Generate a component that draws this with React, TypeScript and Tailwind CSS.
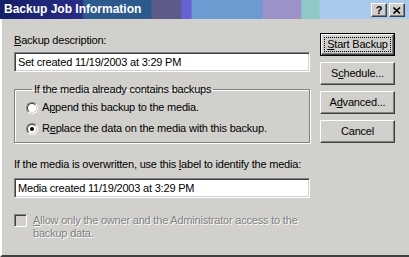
import React from "react";

const raised =
  "border border-t-white border-l-white border-b-[#404040] border-r-[#404040] shadow-[inset_-1px_-1px_0_#808080]";
const sunken =
  "border border-t-[#808080] border-l-[#808080] border-b-white border-r-white shadow-[inset_1px_1px_0_#404040,inset_-1px_-1px_0_#d2d0cc]";

function TitleButton({ children }: { children: React.ReactNode }) {
  return (
    <div
      className={`flex h-[14px] w-[16px] items-center justify-center bg-[#d2d0cc] ${raised}`}
    >
      {children}
    </div>
  );
}

function Button({
  children,
  isDefault,
}: {
  children: React.ReactNode;
  isDefault?: boolean;
}) {
  if (isDefault) {
    return (
      <div className="h-[23px] w-[75px] border border-black">
        <div
          className={`flex h-full w-full items-center justify-center bg-[#d2d0cc] p-[2px] ${raised}`}
        >
          <div className="flex h-full w-full items-center justify-center border border-dotted border-black">
            {children}
          </div>
        </div>
      </div>
    );
  }
  return (
    <div
      className={`flex h-[23px] w-[75px] items-center justify-center bg-[#d2d0cc] ${raised}`}
    >
      {children}
    </div>
  );
}

function Radio({ checked }: { checked?: boolean }) {
  return (
    <div className="h-[12px] w-[12px] shrink-0 rounded-full border border-t-[#808080] border-l-[#808080] border-b-white border-r-white">
      <div className="flex h-full w-full items-center justify-center rounded-full border border-t-[#404040] border-l-[#404040] border-b-[#d2d0cc] border-r-[#d2d0cc] bg-white">
        {checked && <div className="h-[4px] w-[4px] rounded-full bg-black" />}
      </div>
    </div>
  );
}

export default function App() {
  return (
    <div className="flex h-[257px] w-[409px] flex-col overflow-hidden bg-[#d2d0cc] font-['Liberation_Sans',Arial,sans-serif] text-[11px] leading-[13px] tracking-[-0.2px] text-black">
      <div className="flex h-[19px] shrink-0 items-center bg-[linear-gradient(90deg,#141f66_0px,#2a2b88_82px,#2d5a8d_84px,#2d5a8d_151px,#5d5b8c_152px,#5d5b8c_181px,#6661d6_182px,#6661d6_191px,#6b9bd0_192px,#6b9bd0_262px,#9b93c7_263px,#9b93c7_301px,#8fc9c6_302px,#8fc9c6_319px,#a9c9ee_320px)] pl-[4px] pr-[4px]">
        <span className="text-[12px] font-bold tracking-normal text-white">
          Backup Job Information
        </span>
        <div className="ml-auto flex gap-[2px] pt-[1px]">
          <TitleButton>
            <span className="text-[11px] font-bold leading-none">?</span>
          </TitleButton>
          <TitleButton>
            <svg width="8" height="7" viewBox="0 0 8 7">
              <path
                d="M0.5 0.5 L7 6.5 M7 0.5 L0.5 6.5"
                stroke="black"
                strokeWidth="1.6"
              />
            </svg>
          </TitleButton>
        </div>
      </div>

      <div className="flex flex-1 border-b-2 border-l-2 border-b-[#404040] border-l-white pl-[12px]">
        <div className="flex w-[296px] flex-col pt-[15px]">
          <div>
            <u>B</u>ackup description:
          </div>
          <div
            className={`mt-[5px] flex h-[20px] items-center bg-white pl-[3px] ${sunken}`}
          >
            Set created 11/19/2003 at 3:29 PM
          </div>

          <fieldset className="mt-[11px] h-[60px] border border-[#808080] pl-[11px] shadow-[inset_1px_1px_0_#fff,1px_1px_0_#fff]">
            <legend className="ml-[6px] px-[2px]">
              If the media already contains backups
            </legend>
            <div className="mt-[5px] flex items-center gap-[4px]">
              <Radio />
              <span>
                A<u>p</u>pend this backup to the media.
              </span>
            </div>
            <div className="mt-[8px] flex items-center gap-[4px]">
              <Radio checked />
              <span>
                R<u>e</u>place the data on the media with this backup.
              </span>
            </div>
          </fieldset>

          <div className="mt-[15px] whitespace-nowrap">
            If the media is overwritten, use this <u>l</u>abel to identify the
            media:
          </div>
          <div
            className={`mt-[7px] flex h-[20px] items-center bg-white pl-[3px] ${sunken}`}
          >
            Media created 11/19/2003 at 3:29 PM
          </div>

          <div className="mt-[16px] flex items-start gap-[6px]">
            <div className={`h-[13px] w-[13px] shrink-0 ${sunken}`} />
            <div className="text-[#808080] [text-shadow:1px_1px_0_#fff]">
              <u>A</u>llow only the owner and the Administrator access to the
              <br />
              backup data.
            </div>
          </div>
        </div>

        <div className="ml-[10px] flex flex-col gap-[6px] pt-[14px]">
          <Button isDefault>
            <span>
              <u>S</u>tart Backup
            </span>
          </Button>
          <Button>
            <span>
              S<u>c</u>hedule...
            </span>
          </Button>
          <Button>
            <span>
              A<u>d</u>vanced...
            </span>
          </Button>
          <Button>Cancel</Button>
        </div>
      </div>
    </div>
  );
}
